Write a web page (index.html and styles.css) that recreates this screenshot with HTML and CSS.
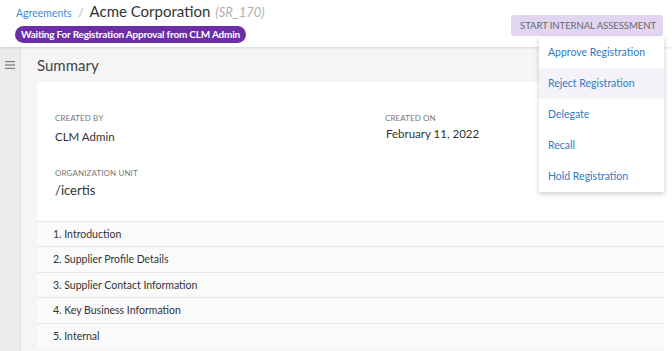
FILE: index.html
```html
<!DOCTYPE html>
<html lang="en">
<head>
    <meta charset="UTF-8">
    <meta name="viewport" content="width=device-width, initial-scale=1.0">
    <title>Acme Corporation</title>
    <link rel="stylesheet" href="styles.css">
</head>
<body>
    <header class="page-header">
        <div class="title-block">
            <div class="breadcrumb">
                <a href="#" class="crumb-link">Agreements</a>
                <span class="crumb-sep">/</span>
                <span class="crumb-title">Acme Corporation</span>
                <span class="crumb-code">(SR_170)</span>
            </div>
            <span class="status-badge">Waiting For Registration Approval from CLM Admin</span>
        </div>
        <button class="action-btn">START INTERNAL ASSESSMENT</button>
    </header>

    <ul class="action-menu">
        <li class="menu-item">Approve Registration</li>
        <li class="menu-item active">Reject Registration</li>
        <li class="menu-item">Delegate</li>
        <li class="menu-item">Recall</li>
        <li class="menu-item">Hold Registration</li>
    </ul>

    <div class="layout">
        <aside class="sidebar">
            <svg class="burger" width="10" height="8" viewBox="0 0 10 8">
                <rect x="0" y="0" width="10" height="1.2" fill="#7a7a7a"/>
                <rect x="0" y="3.4" width="10" height="1.2" fill="#7a7a7a"/>
                <rect x="0" y="6.8" width="10" height="1.2" fill="#7a7a7a"/>
            </svg>
        </aside>
        <main class="content">
            <h2 class="section-title">Summary</h2>
            <div class="card">
                <div class="fields">
                    <div class="field">
                        <div class="field-label">CREATED BY</div>
                        <div class="field-value">CLM Admin</div>
                    </div>
                    <div class="field field-date">
                        <div class="field-label">CREATED ON</div>
                        <div class="field-value">February 11, 2022</div>
                    </div>
                    <div class="field field-org">
                        <div class="field-label">ORGANIZATION UNIT</div>
                        <div class="field-value big">/icertis</div>
                    </div>
                </div>
                <div class="sections">
                    <div class="section-row">1. Introduction</div>
                    <div class="section-row">2. Supplier Profile Details</div>
                    <div class="section-row">3. Supplier Contact Information</div>
                    <div class="section-row">4. Key Business Information</div>
                    <div class="section-row">5. Internal</div>
                </div>
            </div>
        </main>
    </div>
</body>
</html>
```

FILE: styles.css
```css
* {
    margin: 0;
    padding: 0;
    box-sizing: border-box;
}

body {
    font-family: Lato, "Open Sans", sans-serif;
    background: #ffffff;
    color: #333;
    width: 672px;
    height: 351px;
    overflow: hidden;
    position: relative;
}

.page-header {
    height: 47px;
    display: flex;
    justify-content: space-between;
    align-items: flex-start;
    padding: 2px 9px 0 15px;
    background: #fff;
    box-shadow: 0 1px 3px rgba(0, 0, 0, 0.12);
    position: relative;
    z-index: 2;
}

.breadcrumb {
    display: flex;
    align-items: baseline;
    height: 20px;
    padding-left: 1px;
}

.crumb-link {
    color: #3b8bd3;
    text-decoration: none;
    font-size: 10.5px;
}

.crumb-sep {
    color: #aaa;
    font-size: 11px;
    margin: 0 6px 0 7px;
}

.crumb-title {
    font-size: 15px;
    color: #333;
}

.crumb-code {
    font-size: 13px;
    font-style: italic;
    color: #b0b0b0;
    margin-left: 5px;
}

.status-badge {
    display: inline-block;
    background: #6d2da6;
    color: #fff;
    font-size: 10px;
    font-weight: bold;
    letter-spacing: -0.2px;
    line-height: 17px;
    padding: 0 6px;
    border-radius: 9px;
}

.action-btn {
    margin-top: 13px;
    background: #e1d5f1;
    border: none;
    border-radius: 3px;
    color: #686868;
    font-family: inherit;
    font-size: 9.6px;
    letter-spacing: -0.1px;
    height: 21px;
    padding: 0 7px 0 9px;
}

.action-menu {
    list-style: none;
    position: absolute;
    top: 37px;
    left: 539px;
    width: 125px;
    background: #fff;
    box-shadow: 0 2px 5px rgba(0, 0, 0, 0.2);
    z-index: 5;
}

.menu-item {
    height: 31px;
    line-height: 31px;
    padding-left: 9px;
    color: #2f7cc4;
    font-size: 10.5px;
}

.menu-item.active {
    background: #f5f3f9;
}

.layout {
    display: flex;
    height: 304px;
    margin-right: 8px;
}

.sidebar {
    width: 21px;
    background: #ebebeb;
    border-right: 1px solid #e0e0e0;
    padding: 14px 0 0 5px;
}

.burger {
    display: block;
}

.content {
    flex: 1;
    background: #f5f5f5;
    padding-left: 16px;
    overflow: hidden;
}

.section-title {
    font-size: 15px;
    font-weight: normal;
    color: #444;
    height: 35px;
    line-height: 36px;
}

.card {
    background: #fff;
}

.fields {
    display: grid;
    grid-template-columns: 330px 1fr;
    padding: 31px 0 23px 18px;
}

.field-label {
    font-size: 8px;
    color: #777;
    letter-spacing: 0.1px;
}

.field-value {
    font-size: 11.5px;
    color: #333;
    margin-top: 7px;
}

.field-date .field-value {
    margin-top: 4px;
    padding-left: 1px;
}

.field-org {
    margin-top: 25px;
}

.field-value.big {
    font-size: 13px;
    margin-top: 4px;
}

.section-row {
    height: 25.4px;
    line-height: 24px;
    border-top: 1.5px solid #e6e6e6;
    background: #fafafa;
    padding-left: 16px;
    font-size: 10.5px;
    color: #333;
}
```
